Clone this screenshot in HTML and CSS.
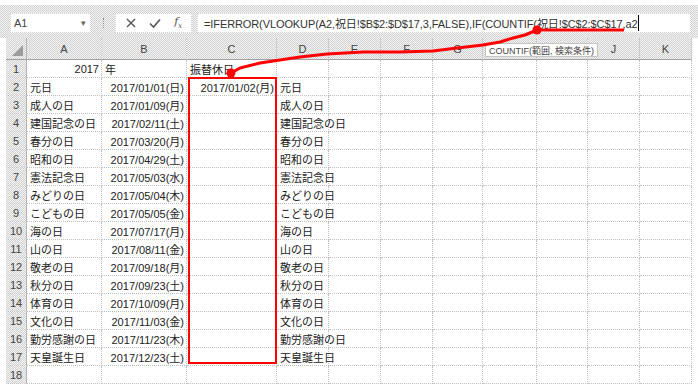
FILE: index.html
```html
<!DOCTYPE html>
<html lang="ja">
<head>
<meta charset="utf-8">
<link rel="stylesheet" href="styles.css">
</head>
<body>
<div class="app">
  <div class="fbar">
    <div class="namebox"><span class="nb-text">A1</span><span class="dd">▾</span></div>
    <div class="sep"></div>
    <div class="btns">
      <svg class="ico" width="12" height="12" viewBox="0 0 12 12"><path d="M2 2L10 10M10 2L2 10" stroke="#555" stroke-width="1.4" fill="none"/></svg>
      <svg class="ico" width="14" height="12" viewBox="0 0 14 12"><path d="M2 6.5L5.5 10L12 2.5" stroke="#555" stroke-width="1.6" fill="none"/></svg>
      <span class="fx">f<sub>x</sub></span>
    </div>
    <div class="finput"><span class="ftext">=IFERROR(VLOOKUP(A2,祝日!$B$2:$D$17,3,FALSE),IF(COUNTIF(祝日!$C$2:$C$17,a2</span><span class="caret"></span></div>
  </div>
  <div class="sheet">
    <div class="corner"><span class="tri"></span></div>
    <div class="ch">A</div><div class="ch">B</div><div class="ch">C</div><div class="ch">D</div><div class="ch">E</div><div class="ch">F</div><div class="ch">G</div><div class="ch"></div><div class="ch"></div><div class="ch">J</div><div class="ch">K</div>

    <div class="rh">1</div><div class="c r">2017</div><div class="c">年</div><div class="c">振替休日</div><div class="c"></div><div class="c"></div><div class="c"></div><div class="c"></div><div class="c"></div><div class="c"></div><div class="c"></div><div class="c"></div>
    <div class="rh">2</div><div class="c">元日</div><div class="c r">2017/01/01(日)</div><div class="c r">2017/01/02(月)</div><div class="c">元日</div><div class="c"></div><div class="c"></div><div class="c"></div><div class="c"></div><div class="c"></div><div class="c"></div><div class="c"></div>
    <div class="rh">3</div><div class="c">成人の日</div><div class="c r">2017/01/09(月)</div><div class="c"></div><div class="c">成人の日</div><div class="c"></div><div class="c"></div><div class="c"></div><div class="c"></div><div class="c"></div><div class="c"></div><div class="c"></div>
    <div class="rh">4</div><div class="c">建国記念の日</div><div class="c r">2017/02/11(土)</div><div class="c"></div><div class="c">建国記念の日</div><div class="c"></div><div class="c"></div><div class="c"></div><div class="c"></div><div class="c"></div><div class="c"></div><div class="c"></div>
    <div class="rh">5</div><div class="c">春分の日</div><div class="c r">2017/03/20(月)</div><div class="c"></div><div class="c">春分の日</div><div class="c"></div><div class="c"></div><div class="c"></div><div class="c"></div><div class="c"></div><div class="c"></div><div class="c"></div>
    <div class="rh">6</div><div class="c">昭和の日</div><div class="c r">2017/04/29(土)</div><div class="c"></div><div class="c">昭和の日</div><div class="c"></div><div class="c"></div><div class="c"></div><div class="c"></div><div class="c"></div><div class="c"></div><div class="c"></div>
    <div class="rh">7</div><div class="c">憲法記念日</div><div class="c r">2017/05/03(水)</div><div class="c"></div><div class="c">憲法記念日</div><div class="c"></div><div class="c"></div><div class="c"></div><div class="c"></div><div class="c"></div><div class="c"></div><div class="c"></div>
    <div class="rh">8</div><div class="c">みどりの日</div><div class="c r">2017/05/04(木)</div><div class="c"></div><div class="c">みどりの日</div><div class="c"></div><div class="c"></div><div class="c"></div><div class="c"></div><div class="c"></div><div class="c"></div><div class="c"></div>
    <div class="rh">9</div><div class="c">こどもの日</div><div class="c r">2017/05/05(金)</div><div class="c"></div><div class="c">こどもの日</div><div class="c"></div><div class="c"></div><div class="c"></div><div class="c"></div><div class="c"></div><div class="c"></div><div class="c"></div>
    <div class="rh">10</div><div class="c">海の日</div><div class="c r">2017/07/17(月)</div><div class="c"></div><div class="c">海の日</div><div class="c"></div><div class="c"></div><div class="c"></div><div class="c"></div><div class="c"></div><div class="c"></div><div class="c"></div>
    <div class="rh">11</div><div class="c">山の日</div><div class="c r">2017/08/11(金)</div><div class="c"></div><div class="c">山の日</div><div class="c"></div><div class="c"></div><div class="c"></div><div class="c"></div><div class="c"></div><div class="c"></div><div class="c"></div>
    <div class="rh">12</div><div class="c">敬老の日</div><div class="c r">2017/09/18(月)</div><div class="c"></div><div class="c">敬老の日</div><div class="c"></div><div class="c"></div><div class="c"></div><div class="c"></div><div class="c"></div><div class="c"></div><div class="c"></div>
    <div class="rh">13</div><div class="c">秋分の日</div><div class="c r">2017/09/23(土)</div><div class="c"></div><div class="c">秋分の日</div><div class="c"></div><div class="c"></div><div class="c"></div><div class="c"></div><div class="c"></div><div class="c"></div><div class="c"></div>
    <div class="rh">14</div><div class="c">体育の日</div><div class="c r">2017/10/09(月)</div><div class="c"></div><div class="c">体育の日</div><div class="c"></div><div class="c"></div><div class="c"></div><div class="c"></div><div class="c"></div><div class="c"></div><div class="c"></div>
    <div class="rh">15</div><div class="c">文化の日</div><div class="c r">2017/11/03(金)</div><div class="c"></div><div class="c">文化の日</div><div class="c"></div><div class="c"></div><div class="c"></div><div class="c"></div><div class="c"></div><div class="c"></div><div class="c"></div>
    <div class="rh">16</div><div class="c">勤労感謝の日</div><div class="c r">2017/11/23(木)</div><div class="c"></div><div class="c">勤労感謝の日</div><div class="c"></div><div class="c"></div><div class="c"></div><div class="c"></div><div class="c"></div><div class="c"></div><div class="c"></div>
    <div class="rh">17</div><div class="c">天皇誕生日</div><div class="c r">2017/12/23(土)</div><div class="c"></div><div class="c">天皇誕生日</div><div class="c"></div><div class="c"></div><div class="c"></div><div class="c"></div><div class="c"></div><div class="c"></div><div class="c"></div>
    <div class="rh">18</div><div class="c"></div><div class="c"></div><div class="c"></div><div class="c"></div><div class="c"></div><div class="c"></div><div class="c"></div><div class="c"></div><div class="c"></div><div class="c"></div><div class="c"></div>
  </div>
  <div class="tip">COUNTIF(範囲, 検索条件)</div>
  <svg class="overlay" width="698" height="388" viewBox="0 0 698 388">
    <rect x="189" y="78" width="87" height="285" fill="none" stroke="#ff0000" stroke-width="2"/>
    <polyline points="231,73 240,68 260,63 280,60 300,57 327,54 363,52 400,52 433,51 457,48 483,45 500,42 513,38 525,35 537,30" fill="none" stroke="#ff0000" stroke-width="3" stroke-linejoin="round"/>
    <line x1="537" y1="30" x2="624" y2="30" stroke="#ff0000" stroke-width="3"/>
    <circle cx="231" cy="73" r="4.5" fill="#ff0000"/>
    <circle cx="537" cy="30" r="4.5" fill="#ff0000"/>
  </svg>
</div>
</body>
</html>
```

FILE: styles.css
```css
* { box-sizing: border-box; }
html, body { margin: 0; padding: 0; background: #fff; }
body {
  font-family: "Liberation Sans", "Noto Sans CJK JP", sans-serif;
  font-size: 11px;
  color: #222;
}
.app {
  position: relative;
  width: 698px;
  height: 388px;
  overflow: hidden;
  background: #fff;
}
.fbar {
  margin-top: 5px;
  height: 33px;
  display: flex;
  align-items: flex-start;
  padding-top: 8px;
  padding-left: 10px;
  background: repeating-conic-gradient(#d2d2d2 0 25%, #f3f3f3 0 50%) 0 0 / 2px 2px;
}
.namebox {
  width: 81px;
  height: 20px;
  background: #fff;
  border: 1px dotted #d0d0d0;
  display: flex;
  align-items: center;
  justify-content: space-between;
  padding: 0 4px 0 3px;
  color: #444;
}
.dd { font-size: 9px; color: #666; }
.sep {
  width: 1px;
  height: 10px;
  margin: 5px 11px 0 12px;
  border-left: 1px dotted #888;
}
.btns {
  width: 77px;
  height: 20px;
  background: #fff;
  border: 1px dotted #d0d0d0;
  display: flex;
  align-items: center;
  justify-content: space-around;
  padding: 0 3px;
}
.fx {
  font-family: "DejaVu Serif", serif;
  font-style: italic;
  font-size: 11px;
  color: #555;
}
.fx sub { font-size: 7px; }
.finput {
  margin-left: 5px;
  width: 494px;
  height: 20px;
  background: #fff;
  border: 1px dotted #d0d0d0;
  display: flex;
  align-items: center;
  padding-left: 6px;
}
.ftext {
  white-space: nowrap;
  color: #333;
  letter-spacing: -0.1px;
}
.caret {
  width: 1px;
  height: 16px;
  background: #000;
  margin-left: 1px;
}
.sheet {
  margin-left: 6px;
  display: grid;
  grid-template-columns: 21px 75px 85px 90px 52px 52px 52px 50px 54px 51px 52px 52px;
  grid-template-rows: 22px repeat(18, 18px);
  width: 686px;
}
.corner, .ch, .rh {
  background: repeating-conic-gradient(#d2d2d2 0 25%, #f3f3f3 0 50%) 0 0 / 2px 2px;
  color: #444;
}
.corner {
  position: relative;
  border-right: 1px solid #b4b4b4;
  border-bottom: 1px solid #a0a0a0;
}
.tri {
  position: absolute;
  right: 3px;
  bottom: 3px;
  width: 0;
  height: 0;
  border-left: 11px solid transparent;
  border-bottom: 11px solid #9c9c9c;
}
.ch {
  display: flex;
  align-items: center;
  justify-content: center;
  padding-top: 1px;
  border-right: 1px dotted #c4c4c4;
  border-bottom: 1px solid #a0a0a0;
}
.rh {
  display: flex;
  align-items: center;
  justify-content: center;
  border-right: 1px solid #b4b4b4;
  border-bottom: 1px dotted #c4c4c4;
}
.c {
  border-right: 1px dotted #c0c0c0;
  border-bottom: 1px dotted #c0c0c0;
  padding: 0 3px;
  display: flex;
  align-items: center;
  white-space: nowrap;
  overflow: visible;
}
.c.r { justify-content: flex-end; padding-right: 2px; }
.tip {
  position: absolute;
  left: 485px;
  top: 43px;
  width: 113px;
  height: 14px;
  background: #fff;
  border: 1px solid #c4c4c4;
  font-size: 9px;
  color: #444;
  display: flex;
  align-items: center;
  padding-left: 3px;
  white-space: nowrap;
}
.overlay {
  position: absolute;
  left: 0;
  top: 0;
  pointer-events: none;
}
```
